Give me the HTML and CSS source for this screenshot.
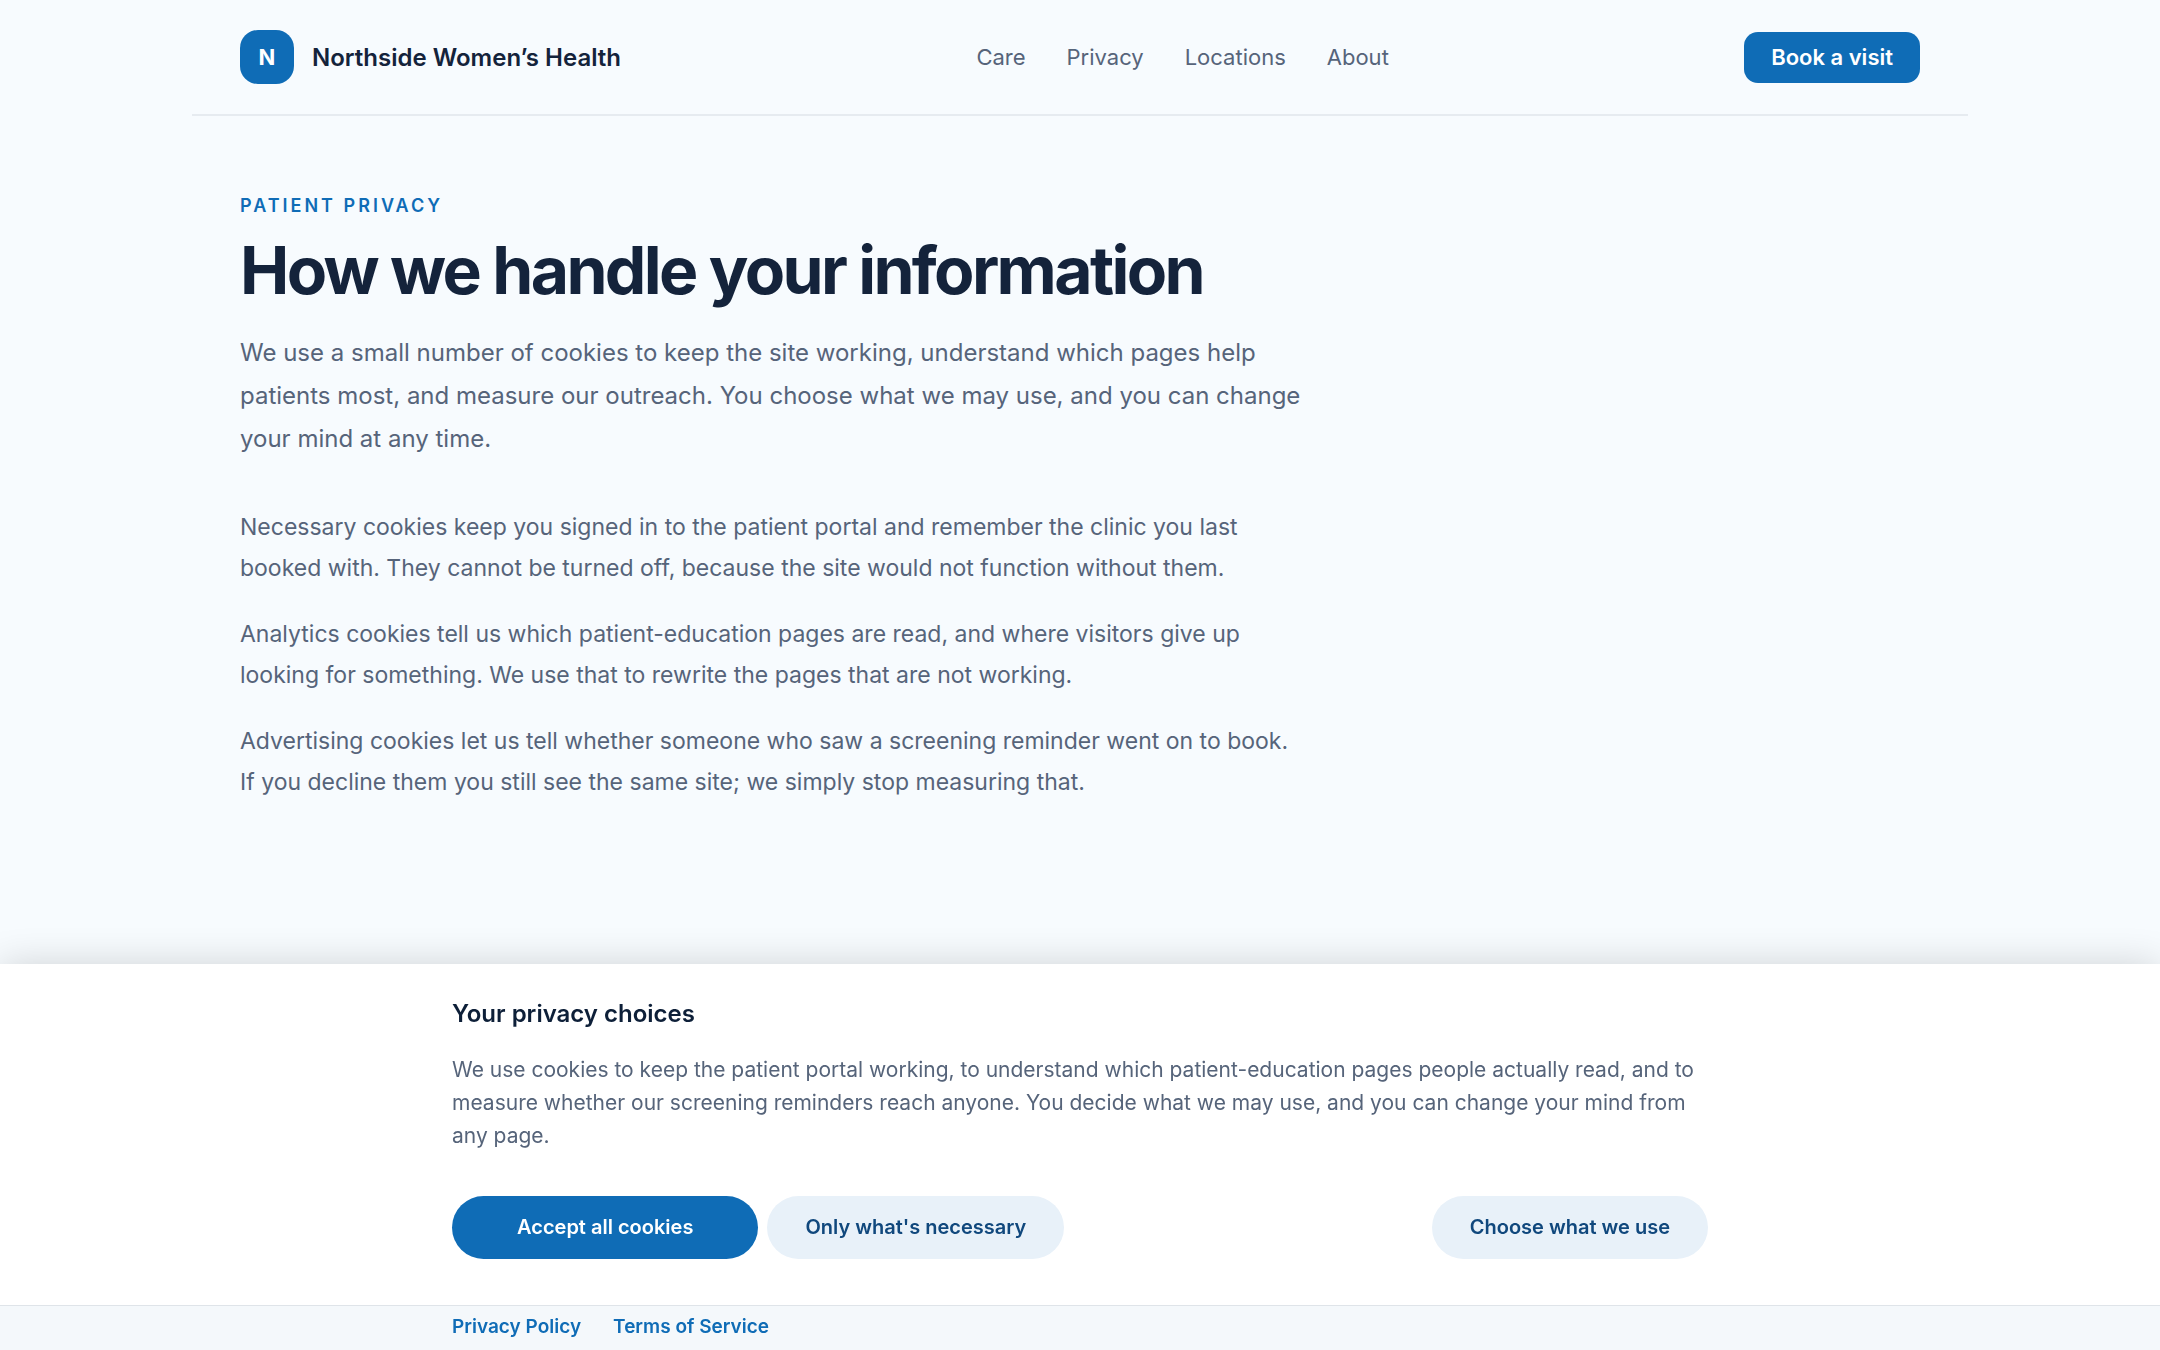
FILE: index.html
```html
<!DOCTYPE html>
<html lang="en">

<head>
    <meta charset="UTF-8">
    <meta name="viewport" content="width=device-width, initial-scale=1.0">
    <title>Patient privacy - Northside Women’s Health</title>
    <link rel="stylesheet" href="styles.css">
</head>

<body>

    <header class="site-header">
        <a class="brand" href="#">
            <span class="brand-mark">N</span>
            <span>Northside Women’s Health</span>
        </a>
        <nav class="site-nav">
            <a href="#">Care</a>
            <a href="#">Privacy</a>
            <a href="#">Locations</a>
            <a href="#">About</a>
        </nav>
        <button class="book" type="button">Book a visit</button>
    </header>

    <main class="content">
        <p class="eyebrow">Patient privacy</p>
        <h1>How we handle your information</h1>
        <p class="lead">
            We use a small number of cookies to keep the site working, understand which pages help patients most, and measure our outreach. You choose what we may use, and you can change your mind at any time.
        </p>
        <p>
            Necessary cookies keep you signed in to the patient portal and remember the clinic you last booked with. They cannot be turned off, because the site would not function without them.
        </p>
        <p>
            Analytics cookies tell us which patient-education pages are read, and where visitors give up looking for something. We use that to rewrite the pages that are not working.
        </p>
        <p>
            Advertising cookies let us tell whether someone who saw a screening reminder went on to book. If you decline them you still see the same site; we simply stop measuring that.
        </p>
    </main>

    <section class="consent" role="dialog" aria-labelledby="consent-title">
        <div class="consent-body">
            <h2 id="consent-title">Your privacy choices</h2>
            <p>
                We use cookies to keep the patient portal working, to understand which patient-education pages people actually read, and to measure whether our screening reminders reach anyone. You decide what we may use, and you can change your mind from any page.
            </p>
            <div class="actions">
                <button class="pill pill-primary" type="button">Accept all cookies</button>
                <button class="pill" type="button">Only what's necessary</button>
                <button class="pill pill-last" type="button">Choose what we use</button>
            </div>
        </div>
        <footer class="consent-footer">
            <div class="links">
                <a href="#">Privacy Policy</a>
                <a href="#">Terms of Service</a>
            </div>
        </footer>
    </section>

</body>

</html>
```

FILE: styles.css
```css
* {
    box-sizing: border-box;
}

body {
    margin: 0;
    min-height: 100vh;
    background-color: #f7fbfe;
    color: #14233b;
    font-family: Inter, "Liberation Sans", sans-serif;
    font-size: 24px;
}

a {
    color: inherit;
    text-decoration: none;
}

button {
    border: 0;
    font-family: inherit;
    font-weight: 600;
    cursor: pointer;
}

/* header */
.site-header {
    display: flex;
    align-items: center;
    justify-content: space-between;
    max-width: 1776px;
    margin: 0 auto;
    padding: 30px 48px;
    border-bottom: 2px solid #e6ebf0;
}

.brand {
    display: flex;
    align-items: center;
    gap: 18px;
    font-weight: 600;
}

.brand-mark {
    display: flex;
    align-items: center;
    justify-content: center;
    width: 54px;
    height: 54px;
    border-radius: 18px;
    background-color: #0f6cb6;
    color: #fff;
    font-size: 22px;
    font-weight: 700;
}

.site-nav {
    display: flex;
    gap: 41px;
    color: #56647a;
    font-size: 22px;
}

.book {
    padding: 0 27px;
    border-radius: 14px;
    background-color: #0f6cb6;
    color: #fff;
    font-size: 22px;
    line-height: 51px;
}

/* article */
.content {
    max-width: 1776px;
    margin: 0 auto;
    padding: 78px 48px;
}

.content p {
    max-width: 1066px;
    margin: 0 0 25px;
    color: #56647a;
    font-size: 23px;
    line-height: 41px;
}

.content .eyebrow {
    margin: 0;
    color: #0f6cb6;
    font-size: 18px;
    font-weight: 600;
    letter-spacing: 3px;
    line-height: 24px;
    text-transform: uppercase;
}

h1 {
    margin: 14px 0 23px;
    font-size: 66px;
    font-weight: 700;
    letter-spacing: -0.04em;
    line-height: 76px;
}

.content .lead {
    margin-bottom: 47px;
    font-size: 24px;
    line-height: 43px;
}

/* cookie consent */
.consent {
    position: fixed;
    right: 0;
    bottom: 0;
    left: 0;
    background-color: #fff;
    box-shadow: 0 0 36px rgba(0, 0, 0, 0.16);
}

.consent-body,
.links {
    width: 100%;
    max-width: 1256px;
    margin: 0 auto;
}

.consent-body {
    padding: 33px 0 46px;
}

.consent h2 {
    margin: 0 0 23px;
    color: #0d1f38;
    font-size: 24px;
    font-weight: 600;
    line-height: 33px;
}

.consent p {
    margin: 0 0 44px;
    color: #56647a;
    font-size: 21px;
    line-height: 33px;
}

.actions {
    display: flex;
    flex-wrap: wrap;
    gap: 9px;
}

.pill {
    padding: 0 38px;
    border-radius: 32px;
    background-color: #e8f1f9;
    color: #10487d;
    font-size: 20px;
    line-height: 63px;
}

.pill-primary {
    padding: 0 65px;
    background-color: #0f6cb6;
    color: #fff;
}

.pill-last {
    margin-left: auto;
}

.consent-footer {
    padding: 8px 0 10px;
    border-top: 1px solid #dfe4e9;
    background-color: #f4f8fb;
}

.links {
    display: flex;
    gap: 32px;
    color: #0f6cb6;
    font-size: 19px;
    font-weight: 600;
    line-height: 26px;
}
```
